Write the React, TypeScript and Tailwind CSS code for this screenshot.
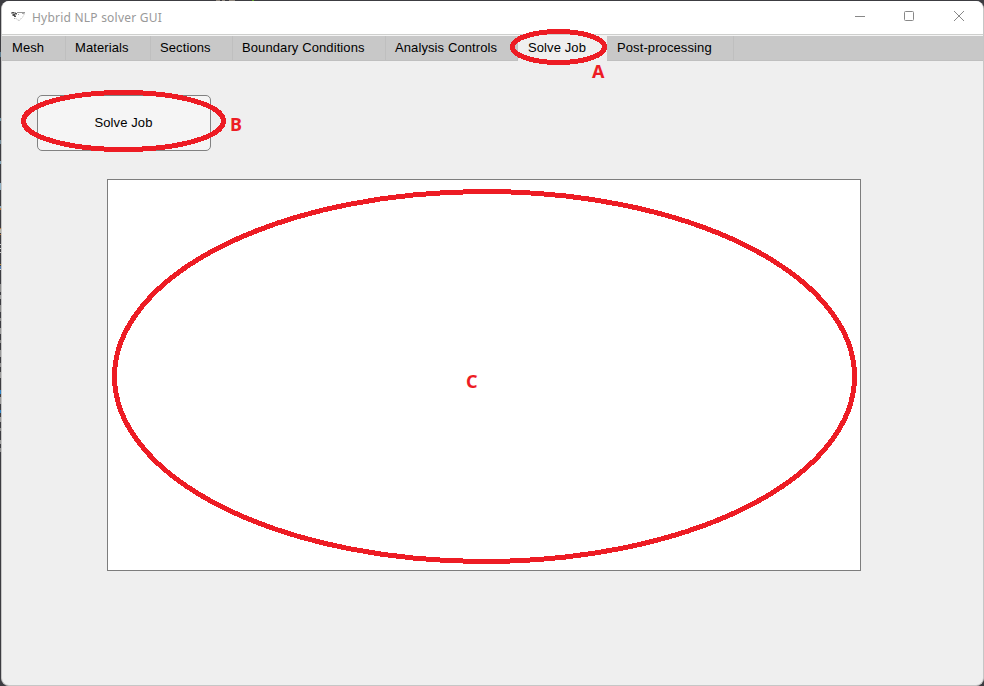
import React from "react";

type Tab = { label: string; width: string; pad: string; active?: boolean };

const tabs: Tab[] = [
  { label: "Mesh", width: "w-[64px]", pad: "pl-[10px]" },
  { label: "Materials", width: "w-[85px]", pad: "pl-[9px]" },
  { label: "Sections", width: "w-[82px]", pad: "pl-[9px]" },
  { label: "Boundary Conditions", width: "w-[153px]", pad: "pl-[9px]" },
  { label: "Analysis Controls", width: "w-[132px]", pad: "pl-[9px]" },
  { label: "Solve Job", width: "w-[89px]", pad: "pl-[10px]", active: true },
  { label: "Post-processing", width: "w-[127px]", pad: "pl-[10px]" },
];

const editorMarks = [
  [52, 5, "#5f7f92"], [118, 3, "#6f93a5"], [140, 4, "#6d8796"], [161, 3, "#7aa0b5"],
  [183, 7, "#8fb0c4"], [206, 2, "#7fa6ba"], [208, 2, "#b9763a"], [228, 1, "#b9763a"],
  [229, 4, "#b5b5aa"], [234, 1, "#b9763a"], [244, 1, "#c8c8c8"], [248, 1, "#c8c8c8"],
  [252, 1, "#c8c8c8"], [264, 1, "#b98a3a"], [266, 3, "#4c78b0"], [269, 1, "#d8d8d8"],
  [284, 8, "#8c8c8c"], [295, 4, "#9a9a9a"], [305, 7, "#8c8c8c"], [318, 3, "#8c8c8c"],
  [328, 6, "#9a9a9a"], [340, 3, "#8c8c8c"], [350, 7, "#9a9a9a"], [363, 4, "#8c8c8c"],
  [372, 6, "#9a9a9a"], [390, 4, "#2f83c5"], [397, 7, "#9a9a9a"], [410, 3, "#2f83c5"],
  [417, 5, "#9a9a9a"], [428, 3, "#8c8c8c"], [440, 4, "#9a9a9a"], [448, 4, "#8c8c8c"],
] as const;

function AppIcon() {
  return (
    <svg className="h-[14px] w-[16px]" viewBox="0 0 16 14" fill="none">
      <path d="M1 2h5v1h1v2H6v2H4V6H2V4H1z" fill="#a5a5a5" />
      <path d="M2 2h2v1H2zM5 3h2v1H5zM3 4h2v2H3zM4 6h2v1H4z" fill="#505050" />
      <path d="M7 2.500h8" stroke="#999" />
      <path d="M14.500 3l-1 3-2 2-2 2.500-2-.5-2-2" stroke="#c2c2c2" strokeDasharray="2 1" />
      <path d="M12 3h2v1h-2zM4 8h1v1H4zM8 4h1v1H8z" fill="#aaa" />
    </svg>
  );
}

function TitleBar() {
  return (
    <header className="flex h-[33px] shrink-0 items-center bg-white">
      <div className="ml-[8px] mt-[-2px]"><AppIcon /></div>
      <h1 className="ml-[6px] whitespace-nowrap font-['Noto_Sans','Open_Sans',sans-serif] text-[12px] leading-4 tracking-[0.22px] text-[#999]">
        Hybrid NLP solver GUI
      </h1>
      <svg className="ml-auto mr-[17px] mt-[-3px] h-[12px] w-[112px]" viewBox="0 0 112 12" fill="none" stroke="#888">
        <path d="M1 6.500h10" />
        <rect x="50.500" y="1.500" width="9" height="9" rx="1" />
        <path d="M100 1l10 10M110 1l-10 10" />
      </svg>
    </header>
  );
}

export default function App() {
  return (
    <div className="relative h-[686px] w-[984px] overflow-hidden bg-[#3c3c41] pl-px pt-px font-['Liberation_Sans',Arial,sans-serif] text-[13px] text-black">
      <svg className="absolute left-0 top-0 h-[686px] w-[260px]" shapeRendering="crispEdges">
        {editorMarks.map(([y, h, color]) => (
          <rect key={y} x="0" y={y} width="1" height={h} fill={color} />
        ))}
        <path d="M216 .5h4m2 0h3m4 0h6" stroke="#8d857c" />
        <path d="M252 .5h2" stroke="#5b9b25" />
      </svg>

      <div className="relative flex h-[685px] w-[983px] flex-col overflow-hidden rounded-[8px] border-b border-l border-r border-[#c6c6c6] bg-[#efefef]">
        <TitleBar />
        <div className="h-px shrink-0 bg-[#cecfcd]" />
        <div className="h-px shrink-0 bg-[#f4f4f4]" />
        <nav className="flex h-[25px] shrink-0 bg-[#c8c8c8]">
          {tabs.map((tab) => (
            <div
              key={tab.label}
              className={`${tab.width} ${tab.pad} shrink-0 whitespace-nowrap border-r pt-[4px] leading-[15px] tracking-[0.1px] ${
                tab.active ? "border-[#efefef] bg-[#efefef]" : "border-b border-[#bfbfbf]"
              }`}
            >
              {tab.label}
            </div>
          ))}
          <div className="flex-1 border-b border-[#bfbfbf]" />
        </nav>
        <main className="flex flex-col items-start">
          <button className="ml-[35px] mt-[34px] h-[56px] w-[174px] rounded-[5px] border border-[#818181] bg-[#f5f5f5] pb-px pr-px tracking-[0.1px]">
            Solve Job
          </button>
          <div className="ml-[105px] mt-[28px] h-[392px] w-[754px] border border-[#7d7d7d] bg-white" />
        </main>
      </div>

      <svg
        className="pointer-events-none absolute left-0 top-0 h-[686px] w-[984px]"
        viewBox="0 0 984 686"
        fill="none"
        stroke="#ed1c24"
        strokeWidth="5"
      >
        <g shapeRendering="crispEdges">
          <ellipse cx="558.500" cy="47" rx="46" ry="15.500" />
          <ellipse cx="123.500" cy="121" rx="100" ry="28.500" />
          <ellipse cx="484.500" cy="376.500" rx="370" ry="185" />
        </g>
        <g fill="#ed1c24" stroke="none" className="font-['Noto_Sans','Open_Sans',sans-serif] text-[18px] font-bold">
          <text x="592" y="78">A</text>
          <text x="230" y="131">B</text>
          <text x="466" y="388">C</text>
        </g>
      </svg>
    </div>
  );
}
